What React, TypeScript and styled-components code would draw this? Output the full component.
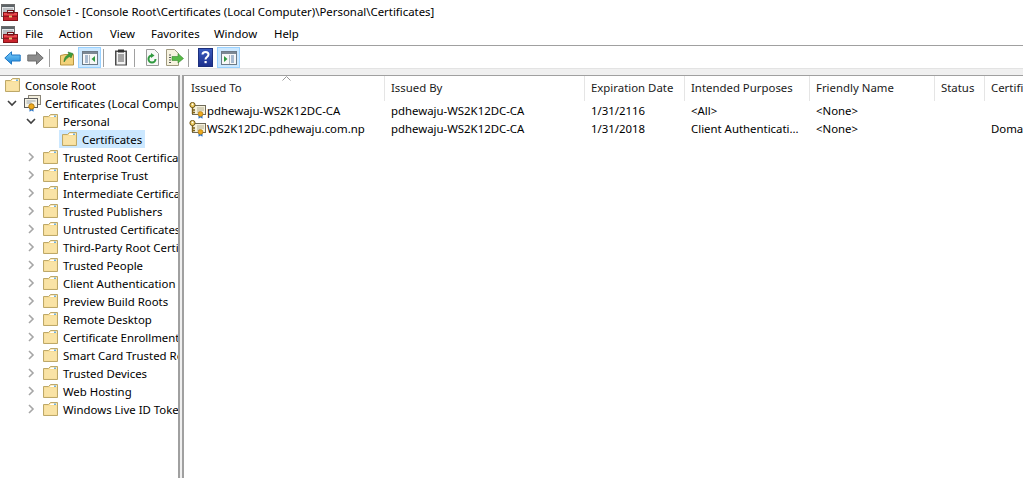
import React from "react";
import styled, { createGlobalStyle } from "styled-components";

const Global = createGlobalStyle`
  html, body { margin: 0; padding: 0; height: 100%; background: #fff; }
  #root { height: 100%; }
  body { font-family: "Noto Sans", "Open Sans", sans-serif; font-size: 11.4px; color: #000; overflow: hidden; }
`;

const Page = styled.div`
  width: 1023px; height: 478px; display: flex; flex-direction: column; background: #fff; overflow: hidden;
`;
const TitleBar = styled.div`
  height: 23px; display: flex; align-items: center; padding: 2px 0 0 1px; gap: 5px; box-sizing: border-box;
`;
const TitleText = styled.span`
  white-space: nowrap; color: #000; margin-top: -2px;
`;
const MenuBar = styled.div`
  height: 22px; display: flex; align-items: center; padding-left: 1px; box-sizing: border-box;
`;
const MenuIconSlot = styled.div`
  width: 24px; display: flex; align-items: center;
`;
const MenuItem = styled.span<{ $w: number }>`
  width: ${(p) => p.$w}px; white-space: nowrap; margin-top: -2px;
`;
const Toolbar = styled.div`
  height: 21px; padding: 1px 0 0 1px; display: flex; align-items: center; box-sizing: content-box;
  border-top: 1px solid #a0a0a0; background: #fff;
`;
const ToolBtn = styled.div<{ $active?: boolean }>`
  width: 23px; height: 21px; display: flex; align-items: center; justify-content: center;
  box-sizing: border-box;
  background: ${(p) => (p.$active ? "#cce8ff" : "transparent")};
  border: 1px solid ${(p) => (p.$active ? "#99d1ff" : "transparent")};
`;
const ToolSep = styled.div`
  width: 1px; height: 18px; background: #a0a0a0; margin: 0 5px 0 2px;
`;
const Gutter = styled.div`
  height: 6px; background: #f0f0f0; border-top: 1px solid #e3e3e3;
`;
const Panes = styled.div`
  flex: 1; display: flex; min-height: 0; background: #f0f0f0;
`;
const TreePane = styled.div`
  width: 180px; box-sizing: border-box; background: #fff; overflow: hidden;
  border-top: 1px solid #a0a0a0; border-right: 2px solid #a0a0a0;
`;
const TreeRow = styled.div<{ $level: number }>`
  height: 18px; display: flex; align-items: center; white-space: nowrap;
  padding-left: ${(p) => (p.$level === 0 ? 5 : 5 + 19 * (p.$level - 1))}px;
`;
const ChevronSlot = styled.div`
  width: 19px; flex: none; display: flex; align-items: center; justify-content: flex-start; padding-left: 2px; box-sizing: border-box;
`;
const TreeLabel = styled.div<{ $selected?: boolean; $store?: boolean }>`
  height: 18px; display: flex; align-items: center; gap: ${(p) => (p.$store ? 4 : 5)}px; padding: 0 3px; margin-left: -3px;
  background: ${(p) => (p.$selected ? "#cce8ff" : "transparent")};
`;
const ListPane = styled.div`
  flex: 1; margin-left: 2px; box-sizing: border-box; background: #fff; overflow: hidden; min-width: 0;
  border-top: 1px solid #a0a0a0; border-left: 2px solid #a0a0a0;
`;
const HeaderRow = styled.div`
  display: flex; height: 25px; white-space: nowrap;
`;
const HeaderCell = styled.div<{ $w: number }>`
  position: relative; flex: none; width: ${(p) => p.$w}px; box-sizing: border-box; padding: 4px 0 0 6px;
  border-left: 1px solid #e5e5e5; overflow: hidden; color: #1a1a1a;
  &:first-child { border-left-color: transparent; }
`;
const SortArrow = styled.svg`
  position: absolute; left: 97px; top: 0;
`;
const DataRow = styled.div`
  display: flex; height: 18px; align-items: center; white-space: nowrap;
`;
const DataCell = styled.div<{ $w: number }>`
  flex: none; width: ${(p) => p.$w}px; box-sizing: border-box; padding-left: 7px; overflow: hidden;
  display: flex; align-items: center;
`;
const NameCell = styled(DataCell)`
  padding-left: 5px; gap: 1px;
`;

const AppIcon = () => (
  <svg width="17" height="17" viewBox="0 0 17 17" style={{ flex: "none" }}>
    <rect x="0.5" y="0.5" width="13" height="12" fill="#e6e8ea" stroke="#6d6d6d" />
    <rect x="1" y="1" width="12" height="2" fill="#5d6468" />
    <path d="M2 5h10M2 7h4M2 9h3" stroke="#8e959a" />
    <rect x="2.5" y="8.5" width="14" height="8" fill="#c9232c" stroke="#83151a" />
    <rect x="3" y="9" width="13" height="2" fill="#e9494f" />
    <rect x="6.5" y="6.5" width="6" height="2.5" fill="none" stroke="#6e1216" />
    <path d="M3 12.5h13" stroke="#8e1a1e" />
    <rect x="8" y="11.5" width="3" height="2" fill="#e8c27a" />
  </svg>
);

const Folder = () => (
  <svg width="15" height="14" viewBox="0 0 15 14" style={{ flex: "none" }}>
    <path d="M0.5 2.5 L0.5 13.5 L14.5 13.5 L14.5 0.5 L7.5 0.5 L5.5 2.5 Z" fill="#f8dd95" stroke="#bda869" />
    <path d="M1.5 4 L13.5 4 L13.5 12.5 L1.5 12.5 Z" fill="#f9e3a6" />
    <path d="M8 1.5 L13.5 1.5 L13.5 3 L6.5 3 Z" fill="#ffffff" />
    <rect x="11" y="1.5" width="2" height="1.5" fill="#6fb0de" />
  </svg>
);

const Chevron = ({ open }: { open: boolean }) =>
  open ? (
    <svg width="10" height="10" viewBox="0 0 10 10">
      <path d="M1 3 L5 7 L9 3" fill="none" stroke="#404040" strokeWidth="1.6" />
    </svg>
  ) : (
    <svg width="10" height="10" viewBox="0 0 10 10">
      <path d="M3 1 L7 5 L3 9" fill="none" stroke="#a6a6a6" strokeWidth="1.6" />
    </svg>
  );

const CertStore = () => (
  <svg width="17" height="17" viewBox="0 0 17 17" style={{ flex: "none" }}>
    <rect x="4.5" y="0.5" width="12" height="9" fill="#f3eedd" stroke="#8a8577" />
    <rect x="0.5" y="3.5" width="13" height="9" fill="#f7f4e6" stroke="#5c5c5c" />
    <path d="M2.5 6h9M2.5 8h5" stroke="#9aa5b0" />
    <path d="M5.5 13 L5.5 16.8 L7.5 15.5 L9.5 16.8 L9.5 13" fill="#2f78c8" />
    <circle cx="7.5" cy="11.5" r="2.7" fill="#eeaa1e" stroke="#b07a10" />
  </svg>
);

const CertIcon = () => (
  <svg width="17" height="17" viewBox="0 0 17 17" style={{ flex: "none" }}>
    <rect x="3.5" y="3.5" width="13" height="9" fill="#f6f2dd" stroke="#6f6a58" />
    <path d="M8 6h7M8 8h7M8 10h3" stroke="#b4ad90" />
    <circle cx="3.5" cy="3" r="2.6" fill="#f1cf66" stroke="#6d561a" />
    <circle cx="3.5" cy="2.4" r="0.8" fill="#fff" />
    <path d="M3.5 5.5 V12 M3.5 8 H6 M3.5 10.5 H6" stroke="#7d621c" strokeWidth="1.4" />
    <path d="M9.5 13 V16.8 L11.5 15.6 L13.5 16.8 V13" fill="#2f78c8" />
    <circle cx="11.5" cy="12" r="2.4" fill="#eeaa1e" stroke="#b07a10" strokeWidth="0.7" />
  </svg>
);

const BackArrow = () => (
  <svg width="17" height="14" viewBox="0 0 17 14">
    <defs>
      <linearGradient id="blueArrow" x1="0" y1="0" x2="0" y2="1">
        <stop offset="0" stopColor="#7fd0fa" />
        <stop offset="1" stopColor="#1c84d8" />
      </linearGradient>
    </defs>
    <path d="M0.8 7 L7.5 0.8 L7.5 4 L16.2 4 L16.2 10 L7.5 10 L7.5 13.2 Z" fill="url(#blueArrow)" stroke="#1f77c4" strokeLinejoin="round" />
  </svg>
);
const ForwardArrow = () => (
  <svg width="17" height="14" viewBox="0 0 17 14">
    <path d="M16.2 7 L9.5 0.8 L9.5 4 L0.8 4 L0.8 10 L9.5 10 L9.5 13.2 Z" fill="#8c8c8c" stroke="#6e6e6e" strokeLinejoin="round" />
  </svg>
);
const UpFolder = () => (
  <svg width="16" height="16" viewBox="0 0 16 16">
    <path d="M1.5 5.5 L1.5 15 L14.5 15 L14.5 4.5 L6 4.5 Z" fill="#f3d27a" stroke="#b89540" />
    <path d="M5 12 C5 7 8 5 10 4.5 L9 2 L14 3.5 L12 8 L11 6.5 C9 7 7 9 5 12 Z" fill="#3c9e3c" stroke="#267026" strokeWidth="0.5" />
  </svg>
);
const PaneLeft = () => (
  <svg width="16" height="14" viewBox="0 0 16 14">
    <rect x="0.5" y="0.5" width="15" height="13" fill="#f7f7f7" stroke="#6c7a86" />
    <rect x="1" y="1" width="14" height="2" fill="#7c8894" />
    <path d="M3 5h3M3 7h3M3 9h3M3 11h3" stroke="#5a7fa8" />
    <path d="M7.5 4 V13" stroke="#b0b8c0" />
    <path d="M13 5 L9.5 8 L13 11 Z" fill="#2f9a3f" />
  </svg>
);
const PaneRight = () => (
  <svg width="16" height="14" viewBox="0 0 16 14">
    <rect x="0.5" y="0.5" width="15" height="13" fill="#f7f7f7" stroke="#6c7a86" />
    <rect x="1" y="1" width="14" height="2" fill="#7c8894" />
    <path d="M3 5 L6.5 8 L3 11 Z" fill="#2f9a3f" />
    <path d="M8.5 4 V13" stroke="#b0b8c0" />
    <path d="M10 5h3M10 7h3M10 9h3M10 11h3" stroke="#5a7fa8" />
  </svg>
);
const Clipboard = () => (
  <svg width="14" height="17" viewBox="0 0 14 17">
    <rect x="1" y="1.5" width="12" height="15" fill="#4a4a4a" />
    <rect x="2.5" y="3" width="9" height="12.5" fill="#f4f4f4" />
    <rect x="4" y="0.5" width="6" height="3" fill="#333" />
    <path d="M4 6h6M4 8h6M4 10h6M4 12h6" stroke="#555" />
  </svg>
);
const Refresh = () => (
  <svg width="14" height="17" viewBox="0 0 14 17">
    <path d="M1.5 0.5 H9.5 L13.5 4.5 V16.5 H1.5 Z" fill="#f8f8f8" stroke="#9a9a9a" />
    <path d="M10.5 10 A3.5 3.5 0 1 1 7 6.5" fill="none" stroke="#2f9a3f" strokeWidth="2" />
    <path d="M6 4 L9.5 6.5 L6 9 Z" fill="#2f9a3f" />
  </svg>
);
const Export = () => (
  <svg width="18" height="17" viewBox="0 0 18 17">
    <path d="M0.5 0.5 H8.5 L12.5 4.5 V16.5 H0.5 Z" fill="#f7f3df" stroke="#a09a80" />
    <path d="M3 6h2M3 8.5h2M3 11h2M3 13.5h2" stroke="#555" />
    <path d="M6 7.5 H12 V4.5 L17.5 9.5 L12 14 V11.5 H6 Z" fill="#57b947" stroke="#3a8a30" strokeWidth="0.6" />
  </svg>
);
const Help = () => (
  <svg width="15" height="19" viewBox="0 0 15 19">
    <defs>
      <linearGradient id="helpFill" x1="0" y1="0" x2="0" y2="1">
        <stop offset="0" stopColor="#3a5cc0" />
        <stop offset="1" stopColor="#1c2f8c" />
      </linearGradient>
    </defs>
    <rect x="0.5" y="0.5" width="14" height="18" fill="url(#helpFill)" stroke="#1c2f7c" />
    <path d="M4.5 6.5 C4.5 3 10.5 3 10.5 6.5 C10.5 9 7.5 9 7.5 11.5" fill="none" stroke="#fff" strokeWidth="2" />
    <rect x="6.5" y="13" width="2.2" height="2.2" fill="#fff" />
  </svg>
);

const treeItems: { label: string; level: number; chevron?: "open" | "closed"; icon?: "store"; selected?: boolean }[] = [
  { label: "Console Root", level: 0 },
  { label: "Certificates (Local Computer)", level: 1, chevron: "open", icon: "store" },
  { label: "Personal", level: 2, chevron: "open" },
  { label: "Certificates", level: 3, selected: true },
  ...[
    "Trusted Root Certification Authorities",
    "Enterprise Trust",
    "Intermediate Certification Authorities",
    "Trusted Publishers",
    "Untrusted Certificates",
    "Third-Party Root Certification Authorities",
    "Trusted People",
    "Client Authentication Issuers",
    "Preview Build Roots",
    "Remote Desktop",
    "Certificate Enrollment Requests",
    "Smart Card Trusted Roots",
    "Trusted Devices",
    "Web Hosting",
    "Windows Live ID Token Issuer",
  ].map((label) => ({ label, level: 2, chevron: "closed" as const })),
];

const columns = [
  { title: "Issued To", w: 200 },
  { title: "Issued By", w: 200 },
  { title: "Expiration Date", w: 100 },
  { title: "Intended Purposes", w: 125 },
  { title: "Friendly Name", w: 125 },
  { title: "Status", w: 50 },
  { title: "Certificate Template", w: 120 },
];

const rows = [
  ["pdhewaju-WS2K12DC-CA", "pdhewaju-WS2K12DC-CA", "1/31/2116", "<All>", "<None>", "", ""],
  ["WS2K12DC.pdhewaju.com.np", "pdhewaju-WS2K12DC-CA", "1/31/2018", "Client Authenticati...", "<None>", "", "Domain Controller"],
];

const menus: [string, number][] = [
  ["File", 34],
  ["Action", 51],
  ["View", 41],
  ["Favorites", 63],
  ["Window", 60],
  ["Help", 40],
];

export default function App() {
  return (
    <Page>
      <Global />
      <TitleBar>
        <AppIcon />
        <TitleText>Console1 - [Console Root\Certificates (Local Computer)\Personal\Certificates]</TitleText>
      </TitleBar>
      <MenuBar>
        <MenuIconSlot><AppIcon /></MenuIconSlot>
        {menus.map(([m, w]) => (
          <MenuItem key={m} $w={w}>{m}</MenuItem>
        ))}
      </MenuBar>
      <Toolbar>
        <ToolBtn><BackArrow /></ToolBtn>
        <ToolBtn><ForwardArrow /></ToolBtn>
        <ToolSep />
        <ToolBtn><UpFolder /></ToolBtn>
        <ToolBtn $active><PaneLeft /></ToolBtn>
        <ToolSep />
        <ToolBtn><Clipboard /></ToolBtn>
        <ToolSep />
        <ToolBtn><Refresh /></ToolBtn>
        <ToolBtn><Export /></ToolBtn>
        <ToolSep />
        <ToolBtn><Help /></ToolBtn>
        <ToolBtn $active><PaneRight /></ToolBtn>
      </Toolbar>
      <Gutter />
      <Panes>
        <TreePane>
          {treeItems.map((t, i) => (
            <TreeRow key={i} $level={t.level}>
              {t.level > 0 && (
                <ChevronSlot>{t.chevron && <Chevron open={t.chevron === "open"} />}</ChevronSlot>
              )}
              <TreeLabel $selected={t.selected} $store={t.icon === "store"}>
                {t.icon === "store" ? <CertStore /> : <Folder />}
                {t.label}
              </TreeLabel>
            </TreeRow>
          ))}
        </TreePane>
        <ListPane>
          <HeaderRow>
            {columns.map((c, i) => (
              <HeaderCell key={c.title} $w={c.w}>
                {c.title}
                {i === 0 && (
                  <SortArrow width="9" height="5" viewBox="0 0 9 5">
                    <path d="M0.5 4.5 L4.5 0.5 L8.5 4.5" fill="none" stroke="#9a9a9a" />
                  </SortArrow>
                )}
              </HeaderCell>
            ))}
          </HeaderRow>
          {rows.map((r, i) => (
            <DataRow key={i}>
              {r.map((v, j) =>
                j === 0 ? (
                  <NameCell key={j} $w={columns[j].w}><CertIcon />{v}</NameCell>
                ) : (
                  <DataCell key={j} $w={columns[j].w}>{v}</DataCell>
                )
              )}
            </DataRow>
          ))}
        </ListPane>
      </Panes>
    </Page>
  );
}
